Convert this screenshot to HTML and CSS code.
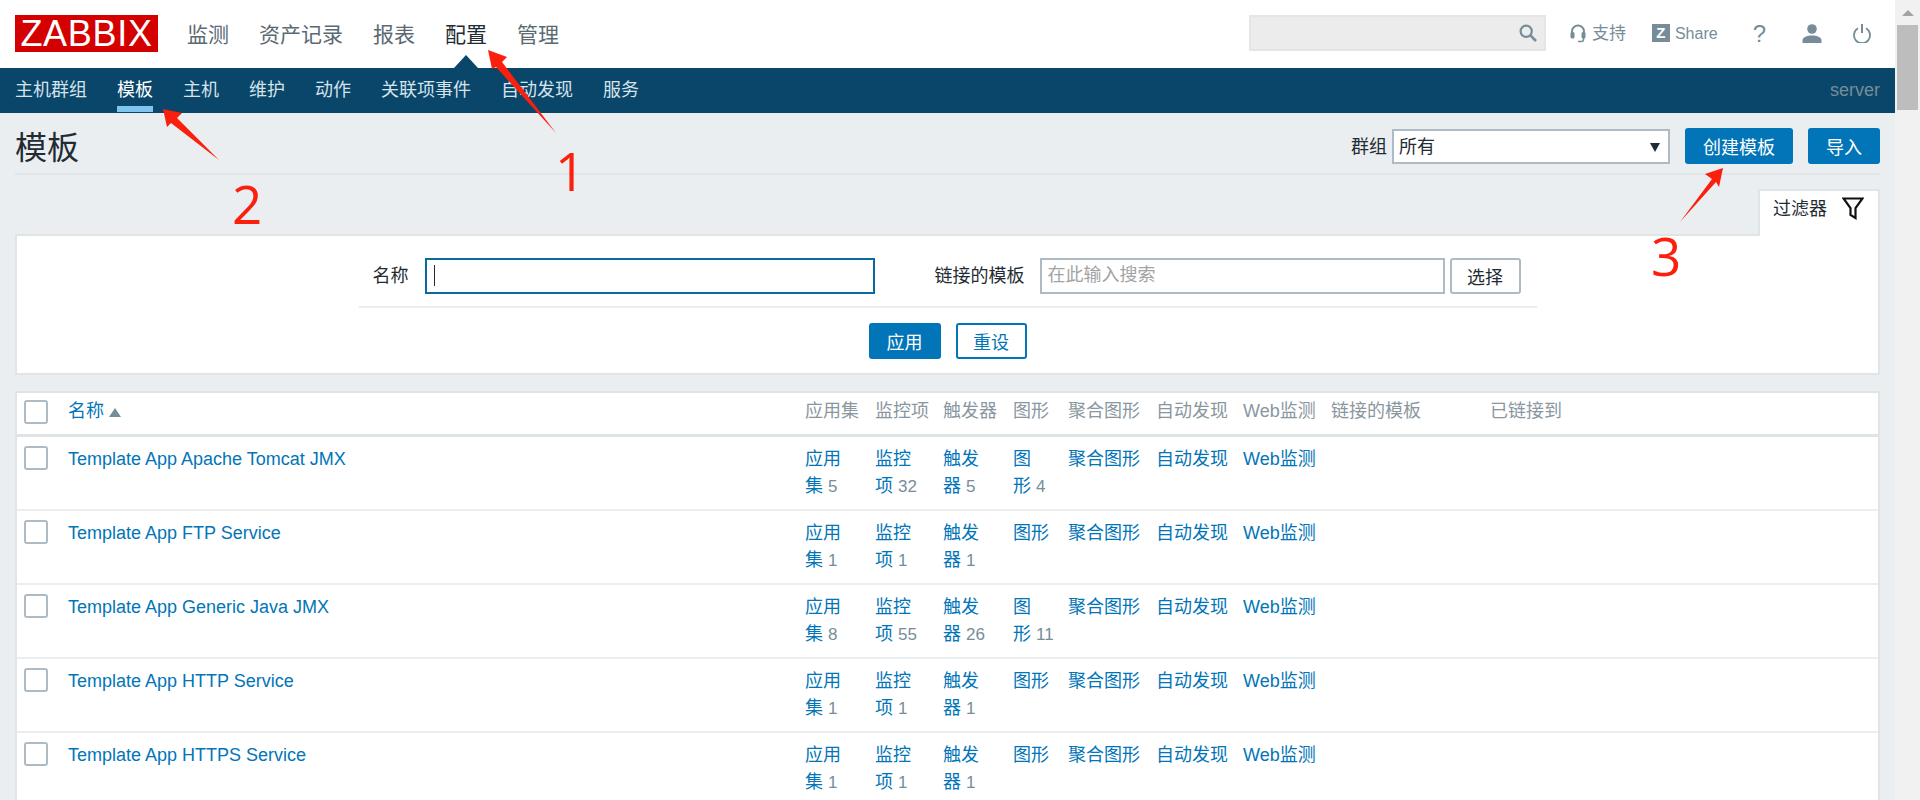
FILE: index.html
```html
<!DOCTYPE html>
<html lang="zh-CN">
<head>
    <meta charset="UTF-8">
    <meta name="viewport" content="width=device-width, initial-scale=1.0">
    <title>Zabbix - 模板</title>
    <link rel="stylesheet" href="styles.css">
</head>
<body>
<div class="page">
    <header class="topbar">
        <a class="logo">ZABBIX</a>
        <nav class="mainnav">
            <a>监测</a>
            <a>资产记录</a>
            <a>报表</a>
            <a class="active">配置</a>
            <a>管理</a>
        </nav>
        <div class="tools">
            <div class="search">
                <svg width="18" height="18" viewBox="0 0 18 18"><circle cx="7.2" cy="7.2" r="5.6" fill="none" stroke="#768d99" stroke-width="2.2"/><path d="M11.2 11.2 17 17" stroke="#768d99" stroke-width="2.6"/></svg>
            </div>
            <a class="tool support">
                <svg width="16" height="19" viewBox="0 0 16 19"><path d="M2 11V7.5a6 6 0 0 1 12 0V11" fill="none" stroke="#768d99" stroke-width="2"/><rect x="0.5" y="8" width="4" height="6.5" rx="1.5" fill="#768d99"/><rect x="11.5" y="8" width="4" height="6.5" rx="1.5" fill="#768d99"/><path d="M13.5 14v1.5a2 2 0 0 1-2 2H8" fill="none" stroke="#768d99" stroke-width="1.5"/></svg>
                支持
            </a>
            <a class="tool share"><span class="zmark">Z</span>Share</a>
            <a class="tool help">?</a>
            <a class="tool user">
                <svg width="20" height="19" viewBox="0 0 20 19"><circle cx="10" cy="5" r="4.8" fill="#768d99"/><path d="M0.5 19v-2.5c0-3.500 4.500-5 9.500-5s9.500 1.500 9.500 5V19z" fill="#768d99"/></svg>
            </a>
            <a class="tool power">
                <svg width="18" height="19" viewBox="0 0 18 19"><path d="M5 4.300a8 8 0 1 0 8 0" fill="none" stroke="#768d99" stroke-width="1.800"/><path d="M9 0v9" stroke="#768d99" stroke-width="2"/></svg>
            </a>
        </div>
    </header>

    <nav class="subnav">
        <a>主机群组</a>
        <a class="active">模板</a>
        <a>主机</a>
        <a>维护</a>
        <a>动作</a>
        <a>关联项事件</a>
        <a>自动发现</a>
        <a>服务</a>
        <span class="server">server</span>
    </nav>

    <main class="content">
        <div class="title-row">
            <h1>模板</h1>
            <div class="title-controls">
                <label>群组</label>
                <div class="select"><span>所有</span><i class="select-arrow"></i></div>
                <button class="btn create">创建模板</button>
                <button class="btn import">导入</button>
            </div>
        </div>

        <div class="filter-tabs">
            <div class="filter-tab">
                过滤器
                <svg width="22" height="23" viewBox="0 0 22 23"><path d="M1.500 1.500h19l-7 9.500v10l-5-3v-7z" fill="none" stroke="#111" stroke-width="2.200"/></svg>
            </div>
        </div>
        <form class="filter">
            <div class="filter-fields">
                <label>名称</label>
                <input class="input name-input" type="text">
                <label class="linked-label">链接的模板</label>
                <input class="input linked-input" type="text" placeholder="在此输入搜索">
                <button type="button" class="btn-pick">选择</button>
            </div>
            <div class="filter-actions">
                <button type="button" class="btn apply">应用</button>
                <button type="button" class="btn-outline">重设</button>
            </div>
        </form>

        <div class="list">
            <table>
                <colgroup>
                    <col class="c-check"><col class="c-name"><col class="c-70"><col class="c-68"><col class="c-70"><col class="c-55"><col class="c-88"><col class="c-87"><col class="c-88"><col class="c-159"><col>
                </colgroup>
                <thead>
                    <tr>
                        <th><input class="chk" type="checkbox"></th>
                        <th><a>名称</a><i class="sort-up"></i></th>
                        <th>应用集</th><th>监控项</th><th>触发器</th><th>图形</th><th>聚合图形</th><th>自动发现</th><th>Web监测</th><th>链接的模板</th><th>已链接到</th>
                    </tr>
                </thead>
                <tbody>
                    <tr>
                        <td><input class="chk" type="checkbox"></td>
                        <td><a>Template App Apache Tomcat JMX</a></td>
                        <td><a>应用集</a>&nbsp;<span class="count">5</span></td>
                        <td><a>监控项</a>&nbsp;<span class="count">32</span></td>
                        <td><a>触发器</a>&nbsp;<span class="count">5</span></td>
                        <td><a>图形</a>&nbsp;<span class="count">4</span></td>
                        <td><a>聚合图形</a></td><td><a>自动发现</a></td><td><a>Web监测</a></td><td></td><td></td>
                    </tr>
                    <tr>
                        <td><input class="chk" type="checkbox"></td>
                        <td><a>Template App FTP Service</a></td>
                        <td><a>应用集</a>&nbsp;<span class="count">1</span></td>
                        <td><a>监控项</a>&nbsp;<span class="count">1</span></td>
                        <td><a>触发器</a>&nbsp;<span class="count">1</span></td>
                        <td><a>图形</a></td>
                        <td><a>聚合图形</a></td><td><a>自动发现</a></td><td><a>Web监测</a></td><td></td><td></td>
                    </tr>
                    <tr>
                        <td><input class="chk" type="checkbox"></td>
                        <td><a>Template App Generic Java JMX</a></td>
                        <td><a>应用集</a>&nbsp;<span class="count">8</span></td>
                        <td><a>监控项</a>&nbsp;<span class="count">55</span></td>
                        <td><a>触发器</a>&nbsp;<span class="count">26</span></td>
                        <td><a>图形</a>&nbsp;<span class="count">11</span></td>
                        <td><a>聚合图形</a></td><td><a>自动发现</a></td><td><a>Web监测</a></td><td></td><td></td>
                    </tr>
                    <tr>
                        <td><input class="chk" type="checkbox"></td>
                        <td><a>Template App HTTP Service</a></td>
                        <td><a>应用集</a>&nbsp;<span class="count">1</span></td>
                        <td><a>监控项</a>&nbsp;<span class="count">1</span></td>
                        <td><a>触发器</a>&nbsp;<span class="count">1</span></td>
                        <td><a>图形</a></td>
                        <td><a>聚合图形</a></td><td><a>自动发现</a></td><td><a>Web监测</a></td><td></td><td></td>
                    </tr>
                    <tr>
                        <td><input class="chk" type="checkbox"></td>
                        <td><a>Template App HTTPS Service</a></td>
                        <td><a>应用集</a>&nbsp;<span class="count">1</span></td>
                        <td><a>监控项</a>&nbsp;<span class="count">1</span></td>
                        <td><a>触发器</a>&nbsp;<span class="count">1</span></td>
                        <td><a>图形</a></td>
                        <td><a>聚合图形</a></td><td><a>自动发现</a></td><td><a>Web监测</a></td><td></td><td></td>
                    </tr>
                </tbody>
            </table>
        </div>
    </main>

    <!-- red annotations drawn over the screenshot -->
    <svg class="arrows" width="1895" height="800" viewBox="0 0 1895 800">
        <polygon fill="#fb1f0e" points="488,50 507,57 502,62 556,133 496,67 492,69"/>
        <polygon fill="#fb1f0e" points="163,109 182,113 177,118 219,160 171,123 167,127"/>
        <polygon fill="#fb1f0e" points="1723,168 1719,187 1716,182 1680,222 1712,179 1705,174"/>
    </svg>
    <span class="mark mark-1">1</span>
    <span class="mark mark-2">2</span>
    <span class="mark mark-3">3</span>
</div>

<div class="scrollbar">
    <i class="scroll-up"></i>
    <div class="scroll-thumb"></div>
</div>
</body>
</html>
```

FILE: styles.css
```css
* {
    box-sizing: border-box;
}

body {
    margin: 0;
    height: 800px;
    display: flex;
    overflow: hidden;
    background-color: #ebeef0;
    color: #1f2c33;
    font-family: "Liberation Sans", "Noto Sans CJK SC", sans-serif;
    font-size: 18px;
    line-height: 27px;
}

button, input {
    font-family: inherit;
}

a {
    color: #0275b8;
}

.page {
    position: relative;
    flex: 1;
    height: 800px;
    overflow: hidden;
}

/* Top bar */
.topbar {
    height: 68px;
    background-color: #ffffff;
    display: flex;
    padding: 15px 24px 0 15px;
}

.logo {
    width: 143px;
    height: 37px;
    background-color: #d40000;
    color: #ffffff;
    font-size: 36px;
    line-height: 38px;
    letter-spacing: 0.7px;
    text-align: center;
}

.mainnav {
    display: flex;
    gap: 30px;
    margin-left: 29px;
    height: 53px;
}

.mainnav a {
    position: relative;
    font-size: 21px;
    line-height: 28px;
    padding-top: 6px;
    color: #5a6a73;
}

.mainnav a.active {
    color: #1f2c33;
}

.mainnav a.active::after {
    content: "";
    position: absolute;
    left: 9px;
    bottom: 0;
    border-left: 12px solid transparent;
    border-right: 12px solid transparent;
    border-bottom: 13px solid #0a466a;
}

.tools {
    margin-left: auto;
    display: flex;
    height: 36px;
    align-items: center;
}

.search {
    width: 297px;
    height: 36px;
    background-color: #ececec;
    border: 2px solid #e5e5e5;
    display: flex;
    align-items: center;
    justify-content: flex-end;
    padding-right: 7px;
}

.tool {
    display: flex;
    align-items: center;
    color: #768d99;
    font-size: 17px;
}

.support {
    margin-left: 24px;
    gap: 6px;
}

.share {
    margin-left: 26px;
    font-size: 16px;
    gap: 5px;
}

.zmark {
    width: 18px;
    height: 18px;
    background-color: #768d99;
    color: #ffffff;
    font-size: 15px;
    font-weight: bold;
    line-height: 18px;
    text-align: center;
}

.help {
    margin-left: 35px;
    font-size: 24px;
}

.user {
    margin-left: 36px;
}

.power {
    margin-left: 31px;
}

/* Second level menu */
.subnav {
    height: 45px;
    background-color: #0a466a;
    display: flex;
    gap: 30px;
    padding: 0 15px;
}

.subnav a {
    height: 44px;
    line-height: 44px;
    color: #d5e3ec;
}

.subnav a.active {
    color: #ffffff;
    box-shadow: inset 0 -6px 0 #7fc5f0;
}

.server {
    margin-left: auto;
    line-height: 44px;
    color: #768d99;
}

/* Content */
.content {
    padding: 0 15px;
}

.title-row {
    height: 62px;
    border-bottom: 2px solid #dfe4e7;
    display: flex;
    justify-content: space-between;
    padding-top: 15px;
}

h1 {
    margin: 2px 0 0;
    font-size: 32px;
    font-weight: normal;
    line-height: 36px;
}

.title-controls {
    display: flex;
    height: 36px;
    align-items: center;
}

.title-controls label {
    padding-top: 2px;
}

.select {
    width: 278px;
    height: 35px;
    margin-left: 5px;
    background-color: #ffffff;
    border: 2px solid #acbbc4;
    display: flex;
    align-items: center;
    justify-content: space-between;
    padding: 2px 8px 0 5px;
}

.select-arrow {
    border-left: 5px solid transparent;
    border-right: 5px solid transparent;
    border-top: 9px solid #1f2c33;
}

.btn {
    height: 36px;
    border: none;
    border-radius: 3px;
    background-color: #0275b8;
    color: #ffffff;
    font-size: 18px;
    padding: 0;
}

.create {
    width: 108px;
    margin-left: 15px;
}

.import {
    width: 72px;
    margin-left: 15px;
}

/* Filter */
.filter-tabs {
    display: flex;
    justify-content: flex-end;
    margin-top: 14px;
}

.filter-tab {
    position: relative;
    width: 122px;
    height: 47px;
    background-color: #ffffff;
    border: 2px solid #dfe4e7;
    border-bottom: none;
    display: flex;
    gap: 15px;
    align-items: flex-start;
    padding: 5px 0 0 13px;
}

.filter-tab svg {
    margin-top: 1px;
}

.filter {
    margin-top: -2px;
    height: 141px;
    background-color: #ffffff;
    border: 2px solid #dfe4e7;
    padding-top: 22px;
}

.filter-fields {
    width: 1178px;
    height: 50px;
    margin: 0 auto;
    padding: 0 0 13px 14px;
    border-bottom: 2px solid #ebeef0;
    display: flex;
    align-items: center;
}

.filter-fields label {
    padding-top: 1px;
}

.input {
    height: 36px;
    background-color: #ffffff;
    border: 2px solid #acbbc4;
    border-radius: 0;
    font-size: 18px;
    padding: 0 6px;
    outline: none;
}

.input::placeholder {
    color: #a3a3a3;
    opacity: 1;
}

.name-input {
    width: 450px;
    margin-left: 16px;
    border-color: #0a6aa0;
    background-image: linear-gradient(#1f2c33, #1f2c33);
    background-repeat: no-repeat;
    background-position: 7px center;
    background-size: 1px 21px;
}

.linked-label {
    margin-left: 60px;
}

.linked-input {
    width: 405px;
    margin-left: 15px;
}

.btn-pick {
    width: 71px;
    height: 36px;
    margin-left: 5px;
    background-color: #ffffff;
    border: 2px solid #acbbc4;
    border-radius: 3px;
    color: #1f2c33;
    font-size: 18px;
    padding: 0;
}

.filter-actions {
    display: flex;
    justify-content: center;
    gap: 15px;
    margin-top: 15px;
}

.apply {
    width: 72px;
}

.btn-outline {
    width: 71px;
    height: 36px;
    background-color: #ffffff;
    border: 2px solid #0275b8;
    border-radius: 3px;
    color: #0275b8;
    font-size: 18px;
    padding: 0;
}

/* Template list */
.list {
    margin-top: 16px;
    background-color: #ffffff;
    border: 2px solid #dfe4e7;
    border-bottom: none;
}

table {
    width: 100%;
    table-layout: fixed;
    border-collapse: collapse;
}

.c-check { width: 51px; }
.c-name { width: 737px; }
.c-70 { width: 70px; }
.c-68 { width: 68px; }
.c-55 { width: 55px; }
.c-88 { width: 88px; }
.c-87 { width: 87px; }
.c-159 { width: 159px; }

th {
    height: 42px;
    border-bottom: 3px solid #dfe4e7;
    padding: 0 14px 3px 0;
    color: #8a979f;
    font-weight: normal;
    text-align: left;
    white-space: nowrap;
}

td {
    height: 74px;
    border-bottom: 2px solid #ebeef0;
    padding: 9px 14px 9px 0;
    vertical-align: top;
}

.count {
    color: #768d99;
    font-size: 17px;
}

.chk {
    appearance: none;
    display: block;
    width: 24px;
    height: 24px;
    margin: 0 0 0 7px;
    background-color: #ffffff;
    border: 2px solid #acbbc4;
    border-radius: 3px;
}

.sort-up {
    display: inline-block;
    margin-left: 5px;
    border-left: 6px solid transparent;
    border-right: 6px solid transparent;
    border-bottom: 9px solid #768d99;
}

/* Annotations */
.arrows {
    position: absolute;
    left: 0;
    top: 0;
}

.mark {
    position: absolute;
    color: #fb1f0e;
    font-family: "Open Sans", sans-serif;
    font-size: 53px;
    line-height: 53px;
}

.mark-1 { left: 555px; top: 144px; }
.mark-2 { left: 232px; top: 177px; }
.mark-3 { left: 1651px; top: 229px; }

/* Fake window scrollbar */
.scrollbar {
    width: 25px;
    height: 800px;
    background-color: #f1f1f1;
    padding: 10px 2px 0;
}

.scroll-up {
    display: block;
    width: 0;
    margin: 0 auto;
    border-left: 6px solid transparent;
    border-right: 6px solid transparent;
    border-bottom: 6px solid #a3a3a3;
}

.scroll-thumb {
    height: 85px;
    margin-top: 9px;
    background-color: #bdbdbd;
}
```
